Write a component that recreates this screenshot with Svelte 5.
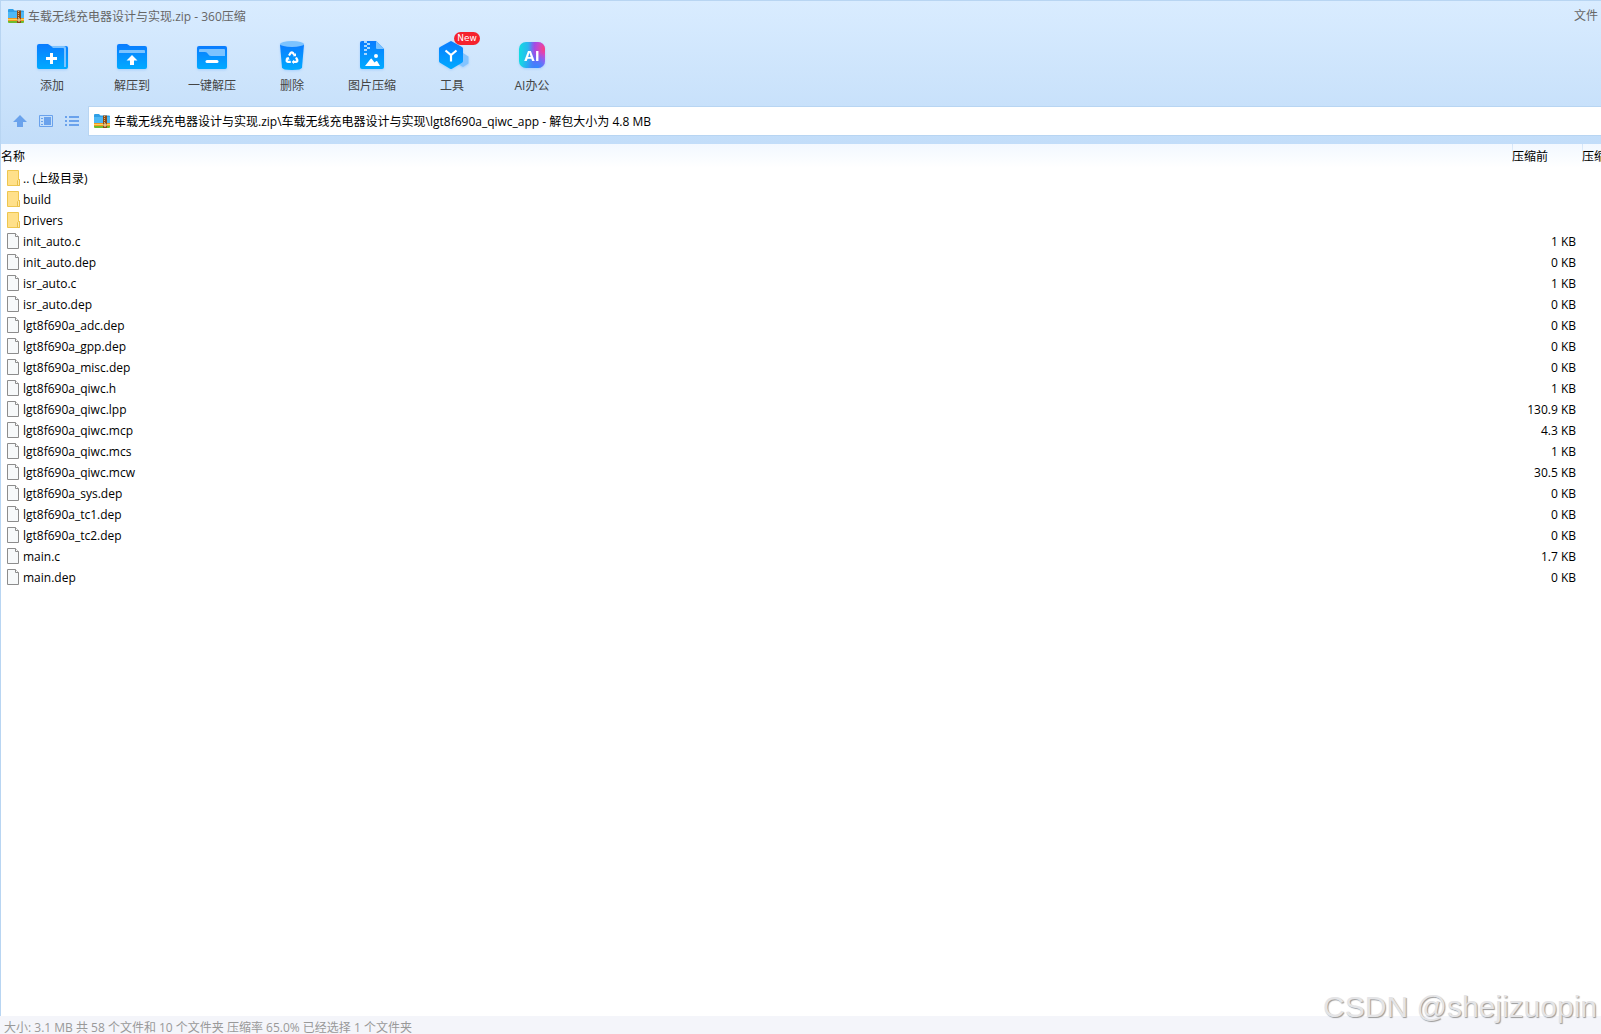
<script lang="ts">
    interface Entry {
        name: string;
        kind: "folder" | "file";
        size?: string;
    }

    const archive = "车载无线充电器设计与实现.zip";
    const path = `${archive}\\车载无线充电器设计与实现\\lgt8f690a_qiwc_app - 解包大小为 4.8 MB`;

    const tools = [
        { id: "add", label: "添加" },
        { id: "extract", label: "解压到" },
        { id: "quick", label: "一键解压" },
        { id: "delete", label: "删除" },
        { id: "image", label: "图片压缩" },
        { id: "tools", label: "工具", badge: "New" },
        { id: "ai", label: "AI办公" },
    ];

    const entries: Entry[] = [
        { name: ".. (上级目录)", kind: "folder" },
        { name: "build", kind: "folder" },
        { name: "Drivers", kind: "folder" },
        { name: "init_auto.c", kind: "file", size: "1 KB" },
        { name: "init_auto.dep", kind: "file", size: "0 KB" },
        { name: "isr_auto.c", kind: "file", size: "1 KB" },
        { name: "isr_auto.dep", kind: "file", size: "0 KB" },
        { name: "lgt8f690a_adc.dep", kind: "file", size: "0 KB" },
        { name: "lgt8f690a_gpp.dep", kind: "file", size: "0 KB" },
        { name: "lgt8f690a_misc.dep", kind: "file", size: "0 KB" },
        { name: "lgt8f690a_qiwc.h", kind: "file", size: "1 KB" },
        { name: "lgt8f690a_qiwc.lpp", kind: "file", size: "130.9 KB" },
        { name: "lgt8f690a_qiwc.mcp", kind: "file", size: "4.3 KB" },
        { name: "lgt8f690a_qiwc.mcs", kind: "file", size: "1 KB" },
        { name: "lgt8f690a_qiwc.mcw", kind: "file", size: "30.5 KB" },
        { name: "lgt8f690a_sys.dep", kind: "file", size: "0 KB" },
        { name: "lgt8f690a_tc1.dep", kind: "file", size: "0 KB" },
        { name: "lgt8f690a_tc2.dep", kind: "file", size: "0 KB" },
        { name: "main.c", kind: "file", size: "1.7 KB" },
        { name: "main.dep", kind: "file", size: "0 KB" },
    ];
</script>

{#snippet zipIcon()}
    <svg class="zip" viewBox="0 0 16 16" aria-hidden="true">
        <path d="M0 2q0-1 1-1h4l1.500 1.500H15q1 0 1 1V12H0z" fill="#2f9fe6" />
        <path d="M0 4h16v6H0z" fill="#4db8f5" />
        <path d="M0 10h16v3H0z" fill="#f39a1e" />
        <path d="M0 11h16v1H0z" fill="#ffd35c" />
        <path d="M0 13h16v1q0 1-1 1H1q-1 0-1-1z" fill="#6dbb2e" />
        <path d="M9 2.500h4V15H9z" fill="#8a4b17" />
        <path d="M10.500 3v8" stroke="#e9b26a" stroke-dasharray="1 1" />
        <path d="M10 11h2v2h-2z" fill="#8a4b17" stroke="#ffe9a8" />
    </svg>
{/snippet}

<div class="window">
    <header>
        <div class="titlebar">
            {@render zipIcon()}
            <h1>{archive} - 360压缩</h1>
            <button class="menu">文件</button>
        </div>

        <nav class="toolbar">
            {#each tools as tool (tool.id)}
                <button class="tool">
                    <svg viewBox="0 0 32 32" aria-hidden="true">
                        {#if tool.id == "add"}
                            <path d="M1 6q0-2 2-2h9l3 2h15q2 0 2 2v19q0 2-2 2H3q-2 0-2-2z" fill="url(#blue)" />
                            <path d="M15 6h13q2 0 2 2v19h-2V9q0-1-1-1H17z" fill="#7cc3ff" />
                            <path d="M15.500 13v11M10 18.500h11" stroke="#fff" stroke-width="3" />
                        {:else if tool.id == "extract"}
                            <path d="M1 6q0-2 2-2h8l3 2h15q2 0 2 2v19q0 2-2 2H3q-2 0-2-2z" fill="url(#blue)" />
                            <path d="M3 13v-2q0-1 1-1h24q1 0 1 1v2z" fill="#7cc3ff" />
                            <path d="M16 15l5.500 5.500H18V25h-4v-4.500h-3.500z" fill="#fff" />
                        {:else if tool.id == "quick"}
                            <rect x="1" y="6" width="30" height="23" rx="2" fill="url(#blue)" />
                            <path d="M3 12v-2q0-1 1-1h24q1 0 1 1v6H15q-2 0-3-2t-3-2z" fill="#7cc3ff" />
                            <path d="M11 21.500h10" stroke="#fff" stroke-width="3" stroke-linecap="round" />
                        {:else if tool.id == "delete"}
                            <path d="M4 4.500h24l-2 23q-.5 2.500-10 2.500T6 27.500z" fill="url(#blue)" />
                            <ellipse cx="16" cy="4" rx="12" ry="3" fill="#7cc3ff" />
                            <g fill="none" stroke="#fff" stroke-width="2.200">
                                <path d="M13 15.500l1.800-2.700q1-1 2 0l1.500 2.200" />
                                <path d="M20 17.500l1.300 2.400q.3 1.600-1.300 2h-2.500" />
                                <path d="M14.800 21.900H12q-1.600-.4-1.300-2l1.200-2" />
                            </g>
                            <path d="M16.800 16.300h3.200v-3.300zM18 19.800v4.200l-2.400-2.100zM9.500 18.300l3.200-1.400.8 3.200z" fill="#fff" />
                        {:else if tool.id == "image"}
                            <path d="M4 3q0-2 2-2h14l8 8v18q0 2-2 2H6q-2 0-2-2z" fill="url(#blue)" />
                            <path d="M20 1l8 8h-7q-1 0-1-1z" fill="#7cc3ff" />
                            <path d="M8 1h3v2H8zM11 3h3v2h-3zM8 5h3v2H8zM11 7h3v2h-3zM8 9h3v2H8zM8 13h3v2H8z" fill="#a9d8ff" />
                            <circle cx="20" cy="16" r="2" fill="#fff" />
                            <path d="M9 26l5.500-7q.7-.8 1.400 0l2.600 3.500 1.500-1.300q.8-.5 1.400.2L24 26z" fill="#fff" />
                        {:else if tool.id == "tools"}
                            <path d="M27 13l5.500 3.500v7L27 27l-6-3.500v-7z" fill="#84c4ff" />
                            <path d="M14 1.400q1-.6 2 0l10 5.600q1 .6 1 1.600v12.500q0 1-1 1.600l-10 6q-1 .6-2 0l-10-6q-1-.6-1-1.600V8.600Q3 7.600 4 7z" fill="url(#blue)" />
                            <path d="M9.500 10.500l5.500 4.500 5.500-4.500M15 15v6.500" fill="none" stroke="#fff" stroke-width="2.200" />
                        {:else}
                            <rect x="3" y="2" width="26" height="26" rx="7" fill="url(#ai-base)" />
                            <rect x="3" y="2" width="26" height="26" rx="7" fill="url(#ai-pink)" />
                            <rect x="3" y="2" width="26" height="26" rx="7" fill="url(#ai-blue)" />
                            <text x="16" y="21" class="ai-text">AI</text>
                        {/if}
                    </svg>
                    <span>{tool.label}</span>
                    {#if tool.badge}
                        <b class="badge">{tool.badge}</b>
                    {/if}
                </button>
            {/each}
        </nav>

        <div class="address">
            <div class="views">
                <button aria-label="向上">
                    <svg viewBox="0 0 16 16"><path d="M8 2l7 7h-4v5H5V9H1z" fill="#6aa2ec" /></svg>
                </button>
                <button aria-label="预览">
                    <svg viewBox="0 0 16 16">
                        <path d="M1.500 2.500h13v11h-13z" fill="none" stroke="#6aa2ec" />
                        <path d="M3 5h2v1H3zM3 8h2v1H3zM3 11h2v1H3zM6 4h7v8H6z" fill="#6aa2ec" />
                    </svg>
                </button>
                <button aria-label="列表">
                    <svg viewBox="0 0 16 16">
                        <path d="M1 3h2v2H1zM1 7h2v2H1zM1 11h2v2H1zM5 3h10v2H5zM5 7h10v2H5zM5 11h10v2H5z" fill="#6aa2ec" />
                    </svg>
                </button>
            </div>
            <label class="path">
                {@render zipIcon()}
                <input type="text" value={path} aria-label="路径" readonly />
            </label>
        </div>
    </header>

    <main>
        <table>
            <thead>
                <tr>
                    <th>名称</th>
                    <th class="before">压缩前</th>
                    <th class="after">压缩后</th>
                </tr>
            </thead>
            <tbody>
                {#each entries as entry (entry.name)}
                    <tr>
                        <td>
                            <div class="name">
                                <svg viewBox="0 0 14 16" aria-hidden="true">
                                    {#if entry.kind == "folder"}
                                        <path d="M.5.5h11v9h1v6H.5z" fill="#ffe08a" stroke="#eec64f" />
                                        <path d="M10.500 15.500v-5l1-1h1v6z" fill="#ffe9a8" stroke="#e9bf48" />
                                    {:else}
                                        <path d="M.5.5h8l3 3v12H.5z" fill="#f7f9fa" stroke="#8c8c8c" />
                                        <path d="M8.500.5v3h3" fill="#fff" stroke="#8c8c8c" />
                                    {/if}
                                </svg>
                                {entry.name}
                            </div>
                        </td>
                        <td class="size">{entry.size ?? ""}</td>
                        <td></td>
                    </tr>
                {/each}
            </tbody>
        </table>
    </main>

    <footer>大小: 3.1 MB 共 58 个文件和 10 个文件夹 压缩率 65.0% 已经选择 1 个文件夹</footer>
    <div class="watermark">CSDN @shejizuopin</div>
</div>

<!-- shared gradients for the toolbar icons -->
<svg class="defs" aria-hidden="true">
    <defs>
        <linearGradient id="blue" x1="0" y1="0" x2="0" y2="1">
            <stop offset="0" stop-color="#0a7cff" />
            <stop offset="1" stop-color="#00aaff" />
        </linearGradient>
        <linearGradient id="ai-base" x1="0" y1="0" x2="1" y2="0">
            <stop offset="0" stop-color="#12dce0" />
            <stop offset="0.350" stop-color="#2bb5f0" />
            <stop offset="0.600" stop-color="#8a50f0" />
            <stop offset="1" stop-color="#c050f0" />
        </linearGradient>
        <radialGradient id="ai-pink" cx="1" cy="0.250" r="0.600">
            <stop offset="0" stop-color="#ff4070" />
            <stop offset="1" stop-color="#d040e8" stop-opacity="0" />
        </radialGradient>
        <radialGradient id="ai-blue" cx="0.700" cy="1" r="0.600">
            <stop offset="0" stop-color="#2d8cff" />
            <stop offset="1" stop-color="#2d8cff" stop-opacity="0" />
        </radialGradient>
    </defs>
</svg>

<style>
    :global(body) {
        margin: 0;
    }
    .window {
        position: relative;
        box-sizing: border-box;
        display: flex;
        flex-direction: column;
        min-height: 100vh;
        overflow: hidden;
        background: #fff;
        color: #000;
        font: 12px/16px "Open Sans", "Noto Sans CJK SC", sans-serif;
    }
    button,
    input {
        padding: 0;
        border: 0;
        background: none;
        color: inherit;
        font: inherit;
    }
    header {
        border-top: 1px solid #b8d5f2;
        border-left: 1px solid #b8d5f2;
        padding-bottom: 8px;
        background: linear-gradient(#d9ecff, #c2ddf9);
    }

    .zip {
        flex: none;
        width: 16px;
        height: 16px;
    }
    .titlebar {
        display: flex;
        align-items: center;
        gap: 4px;
        height: 30px;
        padding: 0 3px 0 7px;
        color: #666;
    }
    h1 {
        flex: 1;
        margin: 0;
        padding-top: 2px;
        font: inherit;
    }

    .toolbar {
        display: flex;
        height: 75px;
        padding-left: 11px;
    }
    .tool {
        position: relative;
        display: flex;
        flex-direction: column;
        align-items: center;
        gap: 6px;
        width: 80px;
        padding-top: 9px;
        color: #444;
    }
    .tool svg {
        width: 32px;
        height: 32px;
        overflow: visible;
        filter: drop-shadow(0 1px 1px #3c96ff44);
    }
    .ai-text {
        fill: #fff;
        font: bold 15px "Open Sans", sans-serif;
        text-anchor: middle;
    }
    .badge {
        position: absolute;
        top: 1px;
        left: 42px;
        width: 26px;
        border-radius: 7px;
        background: #f5222d;
        color: #fff;
        font: 9px/13px "DejaVu Sans", sans-serif;
    }

    .address {
        display: flex;
        align-items: center;
        gap: 8px;
        padding-left: 11px;
    }
    .views {
        display: flex;
        gap: 10px;
    }
    .views button,
    .views svg {
        display: block;
        width: 16px;
        height: 16px;
    }
    .path {
        flex: 1;
        display: flex;
        align-items: center;
        gap: 4px;
        height: 28px;
        padding-left: 5px;
        border: 1px solid #b8d5f2;
        border-right: 0;
        background: #fff;
    }
    .path input {
        flex: 1;
        padding-top: 2px;
        outline: 0;
    }

    main {
        flex: 1;
        border-left: 1px solid #b8d5f2;
    }
    table {
        width: 100%;
        table-layout: fixed;
        border-collapse: collapse;
    }
    thead {
        background: linear-gradient(#f2f8ff, #fff);
    }
    th {
        height: 22px;
        padding: 2px 0 0;
        overflow: hidden;
        font-weight: normal;
        text-align: left;
        white-space: nowrap;
    }
    .before,
    .after {
        background: linear-gradient(#d3e5f8, #f2f8ff) no-repeat 0 0 / 1px 16px;
    }
    .before {
        width: 70px;
    }
    .after {
        width: 19px;
    }
    td {
        height: 19px;
        padding: 2px 0 0;
        line-height: 18px;
        vertical-align: top;
    }
    .name {
        display: flex;
        align-items: flex-start;
        gap: 2px;
        padding-left: 6px;
    }
    .name svg {
        width: 14px;
        height: 16px;
    }
    .size {
        padding-right: 6px;
        text-align: right;
        white-space: nowrap;
    }

    footer {
        padding: 5px 4px 0;
        background: #f4f5fa;
        color: #999;
        line-height: 13px;
    }
    .watermark {
        position: absolute;
        right: 4px;
        bottom: 9px;
        color: #e4e4e6;
        font: 30px/36px "Liberation Sans", sans-serif;
        text-shadow: 1px 1px 1px #999;
    }
    .defs {
        position: absolute;
        width: 0;
        height: 0;
    }
</style>
